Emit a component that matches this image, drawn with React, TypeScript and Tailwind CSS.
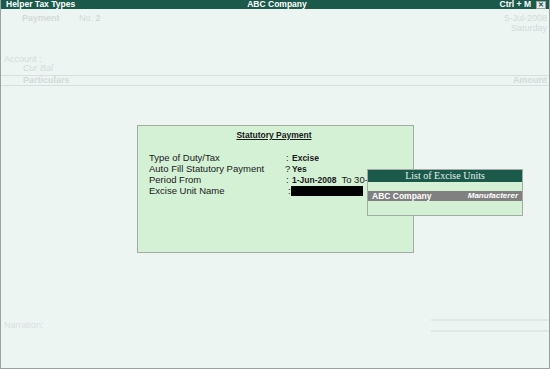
import React from "react";

const F = { fontFamily: '"Liberation Sans", Arial, sans-serif' } as React.CSSProperties;

export default function App() {
  return (
    <div className="relative w-[550px] h-[369px] overflow-hidden bg-[#edf5f3] text-[9px] leading-none" style={F}>
      <div className="flex flex-col h-full border-x border-b border-[#9aa3a1]">
        {/* title bar */}
        <div className="flex items-center h-[9px] bg-[#1b5a4a] text-white font-bold text-[8.5px] pl-[5px] pr-[3px]">
          <div className="w-[200px]">Helper Tax Types</div>
          <div className="flex-1 text-center pl-[2px]">ABC Company</div>
          <div className="w-[200px] flex justify-end items-center gap-[5px]">
            <span>Ctrl + M</span>
            <span className="w-[10px] h-[8px] bg-[#e8eeec] text-[#1b5a4a] text-[7px] flex items-center justify-center border border-[#9aa3a1]">✕</span>
          </div>
        </div>
        {/* header */}
        <div className="flex justify-between pt-[5px] pr-[2px] text-[#d3dad8]">
          <div className="flex pl-[21px]">
            <span className="font-bold w-[57px]">Payment</span>
            <span>No. <b>2</b></span>
          </div>
          <div className="flex flex-col items-end gap-[1px]">
            <span>5-Jul-2008</span>
            <span>Saturday</span>
          </div>
        </div>
        <div className="mt-[22px] pl-[3px] text-[#d3dad8]">Account :</div>
        <div className="pl-[22px] mt-[0px] italic text-[#d3dad8]">Cur Bal</div>
        <div className="mt-[2px] border-t border-[#d7dedd] h-[11px] flex items-center justify-between pl-[22px] pr-[2px] font-bold text-[#d3dad8] border-b">
          <span>Particulars</span>
          <span>Amount</span>
        </div>
        <div className="flex-1" />
        <div className="flex items-start justify-between h-[52px]">
          <div className="pl-[3px] mt-[5px] text-[#d9dfde]">Narration:</div>
          <div className="w-[118px] flex flex-col gap-[9px] mt-[3px]">
            <div className="h-[2px] bg-[#e0e7e6]" />
            <div className="h-[2px] bg-[#e0e7e6]" />
          </div>
        </div>
      </div>

      {/* Statutory Payment dialog */}
      <div className="absolute left-[137px] top-[125px] w-[277px] h-[128px] bg-[#d4f0d5] border border-[#a4aba7] text-[#1a1a1a] text-[9.5px]">
        <div className="text-center mt-[5px] font-bold underline text-[8.5px] pr-[3px]">Statutory Payment</div>
        <div className="mt-[14px] pl-[11px] flex flex-col gap-[2px]">
          <div className="flex h-[9px] items-center"><span className="w-[136px]">Type of Duty/Tax</span><span className="w-[7px] pl-[1px]">:</span><b className="text-[8.5px]">Excise</b></div>
          <div className="flex h-[9px] items-center"><span className="w-[136px]">Auto Fill Statutory Payment</span><span className="w-[7px]">?</span><b className="text-[8.5px]">Yes</b></div>
          <div className="flex h-[9px] items-center whitespace-nowrap"><span className="w-[136px]">Period From</span><span className="w-[7px] pl-[1px]">:</span><b className="text-[8.5px]">1-Jun-2008</b><span className="ml-[5px]">To 30-Jun</span></div>
          <div className="flex h-[9px] items-center"><span className="w-[138px]">Excise Unit Name</span><span className="w-[4px] pl-[1px]">:</span><span className="w-[72px] h-[10px] bg-black" /></div>
        </div>
      </div>

      {/* List popup */}
      <div className="absolute left-[367px] top-[169px] w-[156px] h-[47px] bg-[#d4f0d5] border border-[#a4aba7]">
        <div className="h-[12px] bg-[#1b5a4a] text-[#e6efec] text-[10px] flex items-center justify-center" style={{ fontFamily: '"Liberation Serif", serif' }}>List of Excise Units</div>
        <div className="h-[9px]" />
        <div className="h-[10px] bg-[#808080] text-white font-bold text-[8.5px] flex items-center justify-between px-[4px]">
          <span>ABC Company</span>
          <span className="italic text-[8px]">Manufacterer</span>
        </div>
      </div>
    </div>
  );
}
